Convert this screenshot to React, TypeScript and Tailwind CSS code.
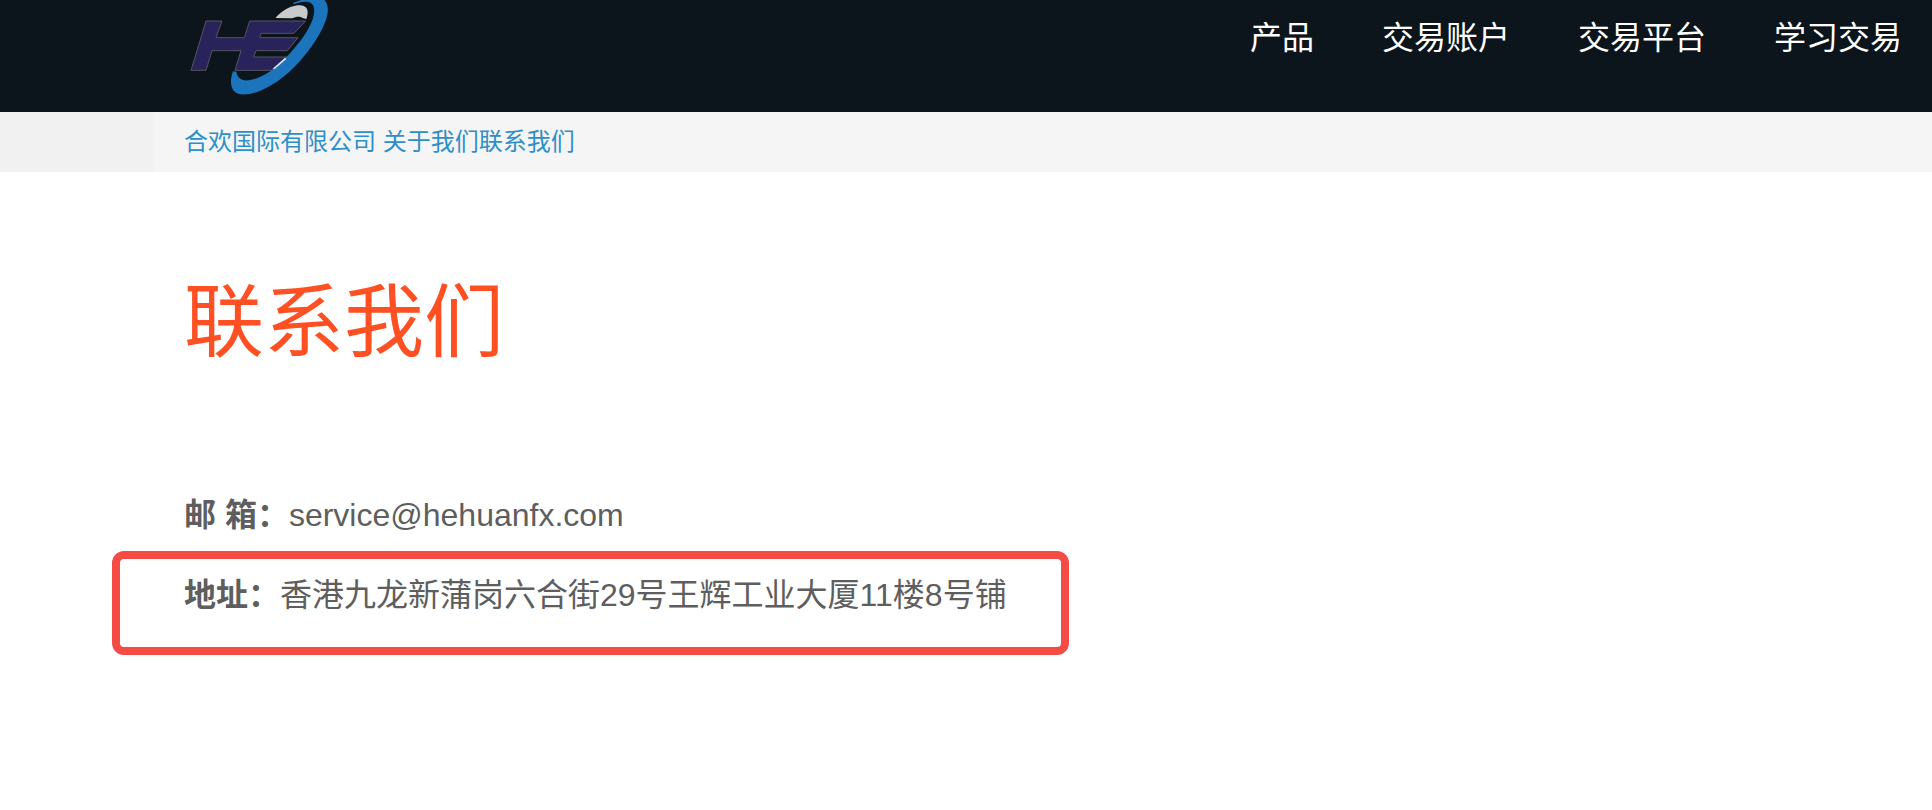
import React from "react";

const navItems = ["产品", "交易账户", "交易平台", "学习交易"];

const Logo: React.FC = () => (
  <svg viewBox="42 0 444 336" className="h-28 w-[148px]" role="img" aria-label="HE">
    <path
      d="M316 54C335 34 356 20 382 16C402 13 414 22 413 38C412 46 411 52 409 57L400 55C392 48 378 49 366 55Z"
      fill="#c9cacc"
    />
    <path
      d="M108 63H156L138 113H223L239 63H407L372 100H273L269 113H384L352 152H258L251 171H350L304 211H195L213 152H126L108 211H63Z"
      fill="#29235c"
      stroke="#55555f"
      strokeWidth="3"
    />
    <path
      d="M367 10C388 1 410 -6 440 -8C466 -8 476 12 473 38C466 88 408 174 348 224C305 260 250 288 212 283C180 277 178 244 189 214L199 215C202 232 212 243 236 241C262 237 290 224 313 205C362 164 412 104 428 58C436 32 434 12 418 7C402 3 386 8 374 12Z"
      fill="#1c75bc"
    />
    <path d="M308 206L345 173L349 177L314 207Z" fill="#dfe3ea" />
  </svg>
);

const Header: React.FC = () => (
  <header className="flex items-start justify-between bg-[#0c141c] pr-[30px] pl-[184px]">
    <a href="#">
      <Logo />
    </a>
    <nav className="flex gap-[68px] pt-3.5 text-[32px] leading-12 text-white">
      {navItems.map((item) => (
        <a key={item} href="#" className="whitespace-nowrap">
          {item}
        </a>
      ))}
    </nav>
  </header>
);

const Breadcrumb: React.FC = () => (
  <div className="bg-[#f1f1f1] pl-[154px]">
    <div className="bg-[#f5f5f5] px-[30px] py-3 text-2xl leading-9 text-[#2d8fc9]">
      <a href="#">合欢国际有限公司</a> <a href="#">关于我们</a>
      <a href="#">联系我们</a>
    </div>
  </div>
);

const App: React.FC = () => (
  <div className="min-h-screen bg-white font-['Liberation_Sans','Noto_Sans_CJK_SC',sans-serif]">
    <Header />
    <Breadcrumb />
    <main className="px-[184px] pt-[91px] text-[32px] leading-12 text-[#5e5e5e]">
      <h1 className="text-[80px] leading-[120px] text-[#ff5023]">联系我们</h1>
      <p className="pt-27">
        <strong>邮 箱：</strong>service@hehuanfx.com
      </p>
      <p className="mt-3 -ml-18 w-fit rounded-xl border-8 border-[#f44b45] pt-3 pr-[54px] pb-7 pl-16">
        <strong>地址：</strong>香港九龙新蒲岗六合街29号王辉工业大厦11楼8号铺
      </p>
    </main>
  </div>
);

export default App;
